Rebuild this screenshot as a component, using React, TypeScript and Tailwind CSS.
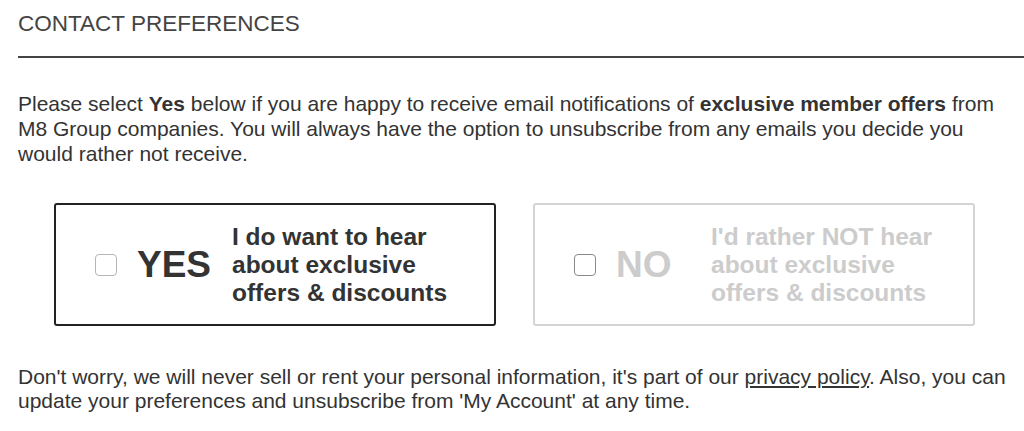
export default function App() {
  const options = [
    { key: 'yes', label: 'YES', lines: ['I do want to hear', 'about exclusive', 'offers & discounts'], active: true },
    { key: 'no', label: 'NO', lines: ["I'd rather NOT hear", 'about exclusive', 'offers & discounts'], active: false },
  ];

  return (
    <div className="min-h-screen bg-white pl-[18px] pt-[11px] font-['Liberation_Sans',Arial,sans-serif] text-[#333]">
      <h2 className="text-[22.5px] leading-[26px] text-[#444]">CONTACT PREFERENCES</h2>
      <div className="mt-[19px] h-[2px] bg-[#444]" />

      <p className="mt-[33px] whitespace-nowrap text-[21px] leading-[25px]">
        Please select <b>Yes</b> below if you are happy to receive email notifications of <b>exclusive member offers</b> from<br />
        M8 Group companies. You will always have the option to unsubscribe from any emails you decide you<br />
        would rather not receive.
      </p>

      {/* Yes / No choices */}
      <div className="mt-[37px] ml-[36px] flex gap-[37px]">
        {options.map(o => (
          <label key={o.key}
            className={`flex h-[123px] w-[442px] items-center rounded-[3px] border-2 bg-white pl-[39px] ${o.active ? 'border-[#222]' : 'border-[#d4d4d4]'}`}>
            <span className={`h-[22px] w-[22px] shrink-0 rounded-[4px] border bg-white ${o.active ? 'border-[#b5b5b5]' : 'border-[#8a8a8a]'}`} />
            <span className={`ml-[20px] w-[95px] shrink-0 text-[37px] font-bold leading-none ${o.active ? 'text-[#333]' : 'text-[#ccc]'}`}>{o.label}</span>
            <span className={`text-[24.5px] font-bold leading-[28px] ${o.active ? 'text-[#333]' : 'text-[#ccc]'}`}>
              {o.lines.map(l => <span key={l} className="block">{l}</span>)}
            </span>
          </label>
        ))}
      </div>

      <p className="mt-[39px] whitespace-nowrap text-[21px] leading-[24px]">
        Don't worry, we will never sell or rent your personal information, it's part of our <a className="underline">privacy policy</a>. Also, you can<br />
        update your preferences and unsubscribe from 'My Account' at any time.
      </p>
    </div>
  );
}
